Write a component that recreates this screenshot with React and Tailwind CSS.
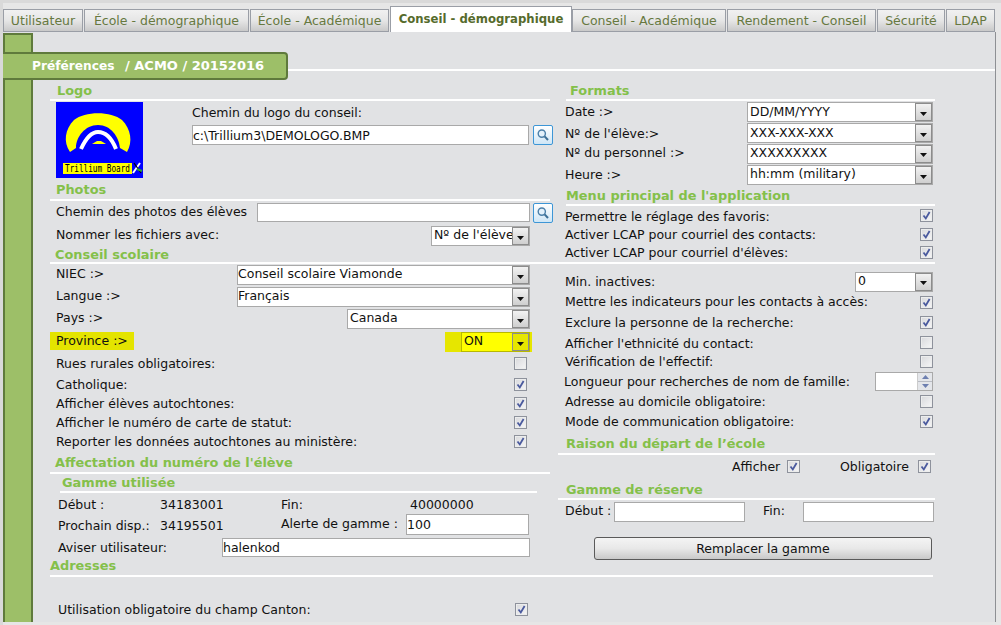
import React from "react";

const Chk = ({ on = true }) => (
  <span className="block w-[13px] h-[13px] border border-[#8e929c] bg-gradient-to-br from-[#d8d9dc] to-[#f6f6f7] shadow-[inset_0_0_0_1px_#eceded] shrink-0">
    {on && (
      <svg viewBox="0 0 11 11" className="w-[11px] h-[11px] block">
        <path d="M2.5 5.5 L4.8 8.5 L8.6 2" fill="none" stroke="#4a5a9e" strokeWidth="1.8" />
      </svg>
    )}
  </span>
);

const Select = ({ w, value, yellow, pl = 2, lh = 16 }) => (
  <div
    className={`flex h-[20px] border border-[#a9a9a9] shrink-0 ${yellow ? "bg-[#ffff00] border-[#b8b800]" : "bg-white"}`}
    style={{ width: w }}
  >
    <div className="flex-1 min-w-0 overflow-hidden whitespace-nowrap" style={{ paddingLeft: pl, lineHeight: `${lh}px` }}>{value}</div>
    <div
      className={`w-[17px] shrink-0 border border-[#8c8c8c] flex items-center justify-center ${yellow ? "bg-[#e6e600]" : "bg-gradient-to-b from-[#f2f2f2] to-[#cfcfcf]"}`}
    >
      <svg viewBox="0 0 7 4" className="w-[7px] h-[4px] mt-[3px]">
        <path d="M0 0H7L3.5 4Z" fill="#111" />
      </svg>
    </div>
  </div>
);

const Input = ({ w, value = "", h = 20 }) => (
  <input
    readOnly
    value={value}
    className="block bg-white border border-[#a9a9a9] text-[12.5px] text-[#111] shrink-0 outline-none font-['DejaVu_Sans',sans-serif]"
    style={{ width: w, height: h }}
  />
);

const Search = () => (
  <span className="w-[20px] h-[20px] shrink-0 rounded-[2px] border border-[#3d96d6] bg-gradient-to-b from-white to-[#cfe6f6] flex items-center justify-center">
    <svg viewBox="0 0 14 14" className="w-[14px] h-[14px]">
      <circle cx="5.8" cy="5.6" r="3.6" fill="#e3f1fb" stroke="#4b7fa8" strokeWidth="1.4" />
      <path d="M8.6 8.4 L12 12" stroke="#3c6f96" strokeWidth="2" />
    </svg>
  </span>
);

const Head = ({ children, h, pl = 7, ml = 0, mr = 0, pt = 0, lh = 16 }) => (
  <div
    className="border-b-2 border-white font-bold text-[12.9px] text-[#84c04a] whitespace-nowrap"
    style={{ height: h, paddingLeft: pl, marginLeft: ml, marginRight: mr, paddingTop: pt, lineHeight: `${lh}px` }}
  >
    {children}
  </div>
);

const Row = ({ h, label, children, pl, pr, dy = 2 }) => (
  <div className="flex items-center justify-between whitespace-nowrap" style={{ height: h, paddingLeft: pl, paddingRight: pr }}>
    <span style={{ marginTop: dy }}>{label}</span>
    {children}
  </div>
);

const L = (p) => <Row pl={6} pr={20} {...p} />;
const R = (p) => <Row pl={7} pr={2} {...p} />;

const Logo = () => (
  <svg viewBox="0 0 87 76" className="w-[87px] h-[76px] block shrink-0">
    <rect width="87" height="76" fill="#0000ff" />
    <path
      d="M14 50 C7 40 9 27 18 18 C29 9 55 9 66 18 C75 27 77 40 71 50 L64 46 C63 35 55 23 42 23 C29 23 20 35 20 46 Z"
      fill="#ffff00"
    />
    <path d="M25 47 C30 36 36 30 42 30 C50 30 56 37 60 47" fill="none" stroke="#fff" strokeWidth="4" />
    <path d="M36 42 L41 39 H45 L50 42 Z" fill="#ffff00" />
    <rect x="7" y="61" width="69" height="11" fill="#ffff00" />
    <text transform="translate(9 70) scale(1 1.25)" fontSize="8" fontFamily="'DejaVu Sans Mono', monospace" fill="#000" textLength="65" lengthAdjust="spacingAndGlyphs">
      Trillium Board
    </text>
    <path d="M77 71 L84 61" stroke="#fff" strokeWidth="2" />
    <path d="M78 61 L85 71" stroke="#000" strokeWidth="1.2" />
    <path d="M81 67 L86 69" stroke="#2fa52f" strokeWidth="2" />
  </svg>
);

const tabs = [
  ["Utilisateur", 81],
  ["École - démographique", 166],
  ["École - Académique", 140],
  ["Conseil - démographique", 182, true],
  ["Conseil - Académique", 155],
  ["Rendement - Conseil", 150],
  ["Sécurité", 69],
  ["LDAP", 50],
];

export default function App() {
  return (
    <div className="w-[1001px] h-[625px] overflow-hidden bg-[#e6e6e6] text-[12.5px] text-[#111] font-['DejaVu_Sans',Verdana,sans-serif] border-t-[3px] border-l-[3px] border-[#d9d9d9]">
      {/* Tabs */}
      <div className="flex items-end h-[29px] w-[993px]">
        {tabs.map(([t, w, active]) =>
          active ? (
            <div
              key={t}
              className="h-[26px] bg-white border-t border-x border-[#9a9ea6] flex items-start justify-center pt-[4px] font-bold text-[11.7px] text-[#566b2c] shrink-0 whitespace-nowrap"
              style={{ width: w }}
            >
              {t}
            </div>
          ) : (
            <div
              key={t}
              className="h-[23px] mr-px pt-[2px] border-t border-x border-b border-[#9a9ea6] bg-gradient-to-b from-[#f1f1f1] via-[#e6e6e6] to-[#c9c9c9] flex items-center justify-center text-[#66783f] shrink-0 whitespace-nowrap"
              style={{ width: w - 1 }}
            >
              {t}
            </div>
          )
        )}
      </div>

      {/* Panel */}
      <div className="w-[993px] h-[590px] bg-[#e1e2e4] border-r border-[#8e9094] overflow-hidden">
        <div className="w-[30px] h-[19px] bg-[#9dbf68] border-x-2 border-t-2 border-[#5f7a3c] mt-[1px]" />
        <div className="flex h-[28px]">
          <div className="w-[285px] shrink-0 bg-[#9dbf68] border-y-2 border-r-2 border-[#5f7a3c] rounded-r-[4px] flex items-center text-white font-bold whitespace-pre pl-[29px]">
            <span className="w-[93px] text-[12.2px]">Préférences</span>
            <span className="text-[13px]">/ ACMO / 20152016</span>
          </div>
          <div className="flex-1 h-[2px] bg-white mt-[17px]" />
        </div>

        <div className="flex">
          <div className="w-[30px] h-[560px] shrink-0 bg-[#9dbf68] border-x-2 border-[#5f7a3c]" />
          <div className="ml-[17px] w-[885px]">
            <div className="flex gap-[8px]">
              {/* Left column */}
              <div className="w-[500px] shrink-0">
                <Head h={21} pt={3}>Logo</Head>
                <div className="flex h-[80px] pl-[6px] pt-[1px]">
                  <Logo />
                  <div className="ml-[49px]">
                    <div className="h-[23px] pt-[2px]">Chemin du logo du conseil:</div>
                    <div className="flex items-start gap-[4px]">
                      <Input w={337} value="c:\Trillium3\DEMOLOGO.BMP" />
                      <Search />
                    </div>
                  </div>
                </div>
                <Head h={20} pl={6} pt={1}>Photos</Head>
                <div className="flex items-center h-[23px] pl-[6px] whitespace-nowrap">
                  <span className="w-[201px] shrink-0">Chemin des photos des élèves</span>
                  <Input w={273} h={19} />
                  <span className="ml-[3px] shrink-0"><Search /></span>
                </div>
                <L h={24} label="Nommer les fichiers avec:" dy={-2}><Select w={99} value="Nº de l'élève" /></L>
                <Head h={16} pl={5} lh={14}>Conseil scolaire</Head>
                <L h={22} label="NIEC :>" dy={-2}><Select w={293} pl={0} value="Conseil scolaire Viamonde" /></L>
                <L h={22} label="Langue :>" dy={-2}><Select w={293} pl={0} value="Français" /></L>
                <L h={22} label="Pays :>" dy={-1}><Select w={183} value="Canada" /></L>
                <div className="flex items-center justify-between h-[22px] pr-[18px]">
                  <span className="bg-[#e4e400] w-[84px] h-[18px] pl-[6px] leading-[18px] whitespace-nowrap">Province :&gt;</span>
                  <div className="bg-[#e6e600] pl-[16px] pr-[2px] h-[20px] mt-[2px] overflow-hidden">
                    <Select w={69} value="ON" yellow />
                  </div>
                </div>
                <L h={22} label="Rues rurales obligatoires:"><span className="mr-[3px]"><Chk on={false} /></span></L>
                <L h={20} label="Catholique:"><span className="mr-[3px]"><Chk /></span></L>
                <L h={19} label="Afficher élèves autochtones:"><span className="mr-[3px]"><Chk /></span></L>
                <L h={19} label="Afficher le numéro de carte de statut:"><span className="mr-[3px]"><Chk /></span></L>
                <L h={19} label="Reporter les données autochtones au ministère:"><span className="mr-[3px]"><Chk /></span></L>
                <Head h={23} pl={5} pt={4}>Affectation du numéro de l'élève</Head>
                <div className="ml-[10px] w-[477px]">
                  <Head h={19} pl={2} pt={1}>Gamme utilisée</Head>
                </div>
                <div className="flex items-center h-[21px] pl-[8px] pt-[4px]">
                  <span className="w-[102px]">Début :</span>
                  <span className="w-[121px]">34183001</span>
                  <span className="w-[129px]">Fin:</span>
                  <span>40000000</span>
                </div>
                <div className="flex items-center h-[21px] pl-[8px]">
                  <span className="w-[102px] mt-[4px] whitespace-nowrap">Prochain disp.:</span>
                  <span className="w-[121px] mt-[4px]">34195501</span>
                  <span className="w-[125px] whitespace-nowrap -mt-[1px]">Alerte de gamme :</span>
                  <Input w={123} value="100" h={21} />
                </div>
                <div className="flex items-center h-[25px] pl-[8px]">
                  <span className="w-[164px] mt-[2px]">Aviser utilisateur:</span>
                  <Input w={308} value="halenkod" h={19} />
                </div>
              </div>

              {/* Right column */}
              <div className="w-[377px] shrink-0">
                <Head h={21} pl={4} ml={8} pt={3}>Formats</Head>
                <R h={22} label="Date :>" dy={0}><Select w={186} lh={18} value="DD/MM/YYYY" /></R>
                <R h={20} label="Nº de l'élève:>"><Select w={186} lh={18} value="XXX-XXX-XXX" /></R>
                <R h={21} label="Nº du personnel :>" dy={0}><Select w={186} value="XXXXXXXXX" /></R>
                <R h={22} label="Heure :>" dy={0}><Select w={186} value="hh:mm (military)" /></R>
                <Head h={20} pl={0} ml={8} pt={2}>Menu principal de l'application</Head>
                <R h={19} label="Permettre le réglage des favoris:" dy={4}><Chk /></R>
                <R h={18} label="Activer LCAP pour courriel des contacts:"><Chk /></R>
                <R h={18} label="Activer LCAP pour courriel d'élèves:"><Chk /></R>
                <div className="h-[3px] border-b-2 border-white -ml-[8px]" />
                <div className="pt-[7px]">
                  <R h={21} label="Min. inactives:"><Select w={78} value="0" /></R>
                </div>
                <R h={20} label="Mettre les indicateurs pour les contacts à accès:" dy={0}><Chk /></R>
                <R h={21} label="Exclure la personne de la recherche:"><Chk /></R>
                <R h={19} label="Afficher l'ethnicité du contact:" dy={4}><Chk on={false} /></R>
                <R h={19} label="Vérification de l'effectif:"><Chk on={false} /></R>
                <div className="flex items-center justify-between h-[21px] pl-[6px] pr-[2px] whitespace-nowrap">
                  <span className="mt-[2px]">Longueur pour recherches de nom de famille:</span>
                  <div className="w-[58px] h-[19px] bg-white border border-[#a9a9a9] flex justify-end">
                    <div className="w-[15px] bg-[#e4e6ea] flex flex-col border-l border-[#ccc]">
                      <span className="flex-1 flex items-center justify-center border-b border-[#b9bcc4]">
                        <svg viewBox="0 0 7 4" className="w-[7px] h-[4px]"><path d="M0 4H7L3.5 0Z" fill="#6d7fb0" /></svg>
                      </span>
                      <span className="flex-1 flex items-center justify-center">
                        <svg viewBox="0 0 7 4" className="w-[7px] h-[4px]"><path d="M0 0H7L3.5 4Z" fill="#6d7fb0" /></svg>
                      </span>
                    </div>
                  </div>
                </div>
                <R h={19} label="Adresse au domicile obligatoire:"><Chk on={false} /></R>
                <R h={21} label="Mode de communication obligatoire:"><Chk /></R>
                <Head h={23} pl={8} pt={4}>Raison du départ de l’école</Head>
                <div className="flex items-center h-[23px] pl-[174px]">
                  <span className="w-[55px] mt-[2px]">Afficher</span>
                  <Chk />
                  <span className="ml-[40px] w-[78px] mt-[2px]">Obligatoire</span>
                  <Chk />
                </div>
                <Head h={22} pl={8} pt={4}>Gamme de réserve</Head>
                <div className="flex items-center h-[23px] pl-[7px]">
                  <span className="w-[49px]">Début :</span>
                  <Input w={131} />
                  <span className="w-[40px] ml-[18px]">Fin:</span>
                  <Input w={131} />
                </div>
                <div className="pl-[36px] pt-[14px]">
                  <div className="w-[338px] h-[23px] pt-[2px] border border-[#5a5a5a] rounded-[3px] bg-gradient-to-b from-[#f4f4f4] via-[#e8e8e8] to-[#c9c9c9] flex items-center justify-center">
                    Remplacer la gamme
                  </div>
                </div>
              </div>
            </div>

            {/* Adresses */}
            <div className="w-[883px]">
              <Head h={17} pl={0} lh={12}>Adresses</Head>
              <div className="flex items-center justify-between h-[19px] mt-[23px] pl-[8px] pr-[5px] w-[483px]">
                <span className="whitespace-nowrap mt-[2px]">Utilisation obligatoire du champ Canton:</span>
                <Chk />
              </div>
            </div>
          </div>
        </div>
      </div>
    </div>
  );
}
